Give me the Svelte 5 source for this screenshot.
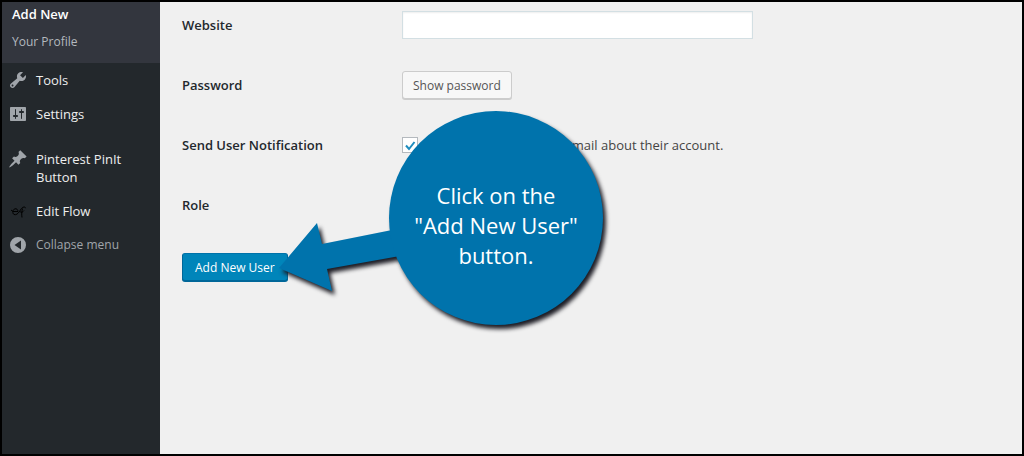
<script>
  const menu = [
    { name: "Tools", icon: "tools" },
    { name: "Settings", icon: "settings" },
    { name: "Pinterest PinIt Button", icon: "pin", first: true },
    { name: "Edit Flow", icon: "flow" },
  ];

  const icons = {
    tools:
      "M16.68 9.77c-1.34 1.34-3.3 1.67-4.95.99l-5.41 6.52c-.99.99-2.59.99-3.58 0s-.99-2.59 0-3.57l6.52-5.42c-.68-1.65-.35-3.61.99-4.95 1.28-1.28 3.12-1.62 4.72-1.06l-2.89 2.89 2.82 2.82 2.86-2.87c.53 1.58.18 3.39-1.08 4.65zM3.81 16.21c.4.39 1.04.39 1.43 0 .4-.4.4-1.04 0-1.43-.39-.4-1.03-.4-1.43 0-.39.39-.39 1.03 0 1.43z",
    settings:
      "M18 16V4c0-.55-.45-1-1-1H3c-.55 0-1 .45-1 1v12c0 .55.45 1 1 1h14c.55 0 1-.45 1-1zM8 11h1c.55 0 1 .45 1 1s-.45 1-1 1H8v1.5c0 .28-.22.5-.5.5s-.5-.22-.5-.5V13H6c-.55 0-1-.45-1-1s.45-1 1-1h1V5.5c0-.28.22-.5.5-.5s.5.22.5.5V11zm5-2h-1c-.55 0-1-.45-1-1s.45-1 1-1h1V5.5c0-.28.22-.5.5-.5s.5.22.5.5V7h1c.55 0 1 .45 1 1s-.45 1-1 1h-1v5.5c0 .28-.22.5-.5.5s-.5-.22-.5-.5V9z",
    pin: "M10.44 3.02l1.82-1.82 6.36 6.35-1.83 1.82c-1.05-.68-2.48-.57-3.41.36l-.75.75c-.92.93-1.04 2.35-.35 3.41l-1.83 1.82-2.41-2.41-2.8 2.79c-.42.42-3.38 2.71-3.8 2.29s1.86-3.39 2.28-3.81l2.79-2.79L4.1 9.36l1.83-1.82c1.05.69 2.48.57 3.4-.36l.75-.75c.93-.92 1.05-2.35.36-3.41z",
  };

  let website = "";
  let notify = true;
</script>

<div class="page">
  <nav>
    <ul class="submenu">
      <li><a class="current" href="#add-new">Add New</a></li>
      <li><a href="#profile">Your Profile</a></li>
    </ul>
    <ul class="menu">
      {#each menu as item}
        <li class:first={item.first}>
          <a class="item" href="#{item.icon}">
            <svg viewBox="0 0 20 20" aria-hidden="true">
              {#if item.icon == "flow"}
                <path
                  class="flow"
                  d="M3 9l2 1.500h5c0-2-1.500-3-3-2.700-2.500.7-2.800 4.700-1 5.700 2 .8 4-.8 5.500-3 1.200-2 2.500-4.500 4.500-4.500 1 0 1.500.5 1.500 1.200M12 10c0 2 2.500 1.700 4-.5M14.500 7.500c-.8 3-1 6-.5 9"
                />
              {:else}
                <path fill-rule="evenodd" d={icons[item.icon]} />
              {/if}
            </svg>
            <span>{item.name}</span>
          </a>
        </li>
      {/each}
    </ul>
    <button type="button" class="item collapse">
      <svg viewBox="0 0 20 20" aria-hidden="true">
        <path fill-rule="evenodd" d="M10 2a8 8 0 1 0 0 16a8 8 0 1 0 0-16zM13 5.500v9L6.500 10z" />
      </svg>
      <span>Collapse menu</span>
    </button>
  </nav>

  <main>
    <form on:submit|preventDefault>
      <div class="row">
        <label class="title" for="website">Website</label>
        <input id="website" class="text" type="text" bind:value={website} />
      </div>
      <div class="row">
        <label class="title" for="show-password">Password</label>
        <button id="show-password" class="button" type="button">Show password</button>
      </div>
      <div class="row">
        <span class="title">Send User Notification</span>
        <label class="check">
          <input type="checkbox" bind:checked={notify} />
          Send the new user an email about their account.
        </label>
      </div>
      <div class="row">
        <span class="title">Role</span>
      </div>
      <button class="button primary" type="submit">Add New User</button>
    </form>

    <div class="callout">
      <svg viewBox="0 0 340 230" aria-hidden="true">
        <path d="M3 160L41 115L46 136L116 122L124 148L51 161L56 183z" />
        <circle cx="220" cy="110" r="107" />
      </svg>
      <p>Click on the<br />"Add New User"<br />button.</p>
    </div>
  </main>
</div>

<style>
  :global(body) {
    background: #f0f0f0;
  }
  .page {
    display: flex;
    min-height: 100vh;
    box-sizing: border-box;
    border: 2px solid #000;
    font-family: "Open Sans", "Noto Sans", sans-serif;
    font-size: 13px;
    line-height: 18px;
    color: #444;
  }

  nav {
    flex: 0 0 158px;
    background: #23282c;
  }
  ul {
    list-style: none;
    margin: 0;
    padding: 0;
  }
  a {
    color: #eee;
    text-decoration: none;
  }
  .submenu {
    display: flex;
    flex-direction: column;
    gap: 10px;
    padding: 3px 10px 12px;
    background: #33363e;
    font-size: 12px;
  }
  .submenu a {
    display: block;
    color: #b4b9be;
  }
  .submenu a.current {
    color: #fff;
    font-size: 13px;
    font-weight: 600;
  }
  .first {
    margin-top: 11px;
  }
  .item {
    display: flex;
    gap: 8px;
    padding: 8px 20px 8px 6px;
  }
  .item svg {
    flex: none;
    width: 20px;
    height: 20px;
    margin: -1px 0;
    fill: #a0a5aa;
  }
  .item .flow {
    fill: none;
    stroke: #000;
    stroke-width: 1;
  }
  .collapse {
    width: 100%;
    border: 0;
    background: none;
    color: #a0a5aa;
    font: inherit;
    font-size: 12px;
    text-align: left;
  }

  main {
    position: relative;
    flex: 1;
    padding: 9px 22px;
    background: #f0f0f0;
  }
  form {
    display: flex;
    flex-direction: column;
    align-items: flex-start;
    gap: 32px;
  }
  .row {
    display: grid;
    grid-template-columns: 220px 1fr;
    align-items: center;
    justify-items: start;
    width: 100%;
    min-height: 28px;
  }
  .title {
    color: #23282d;
    font-weight: 600;
  }
  .text {
    box-sizing: border-box;
    width: 100%;
    max-width: 351px;
    height: 28px;
    border: 1px solid #d3dfe3;
    background: #fff;
    box-shadow: inset 0 1px 2px rgba(0, 0, 0, 0.07);
  }
  .button {
    height: 28px;
    padding: 0 10px;
    border: 1px solid #ccc;
    border-radius: 3px;
    background: #f7f7f7;
    box-shadow: 0 1px 0 #ccc;
    color: #555;
    font-family: inherit;
    font-size: 12px;
  }
  .primary {
    margin-top: 2px;
    padding: 0 12px;
    border-color: #0073aa #006799 #006799;
    background: #0085ba;
    box-shadow: 0 1px 0 #006799;
    color: #fff;
  }
  .check {
    display: flex;
    align-items: center;
    gap: 12px;
  }
  .check input {
    appearance: none;
    width: 16px;
    height: 16px;
    margin: 0;
    border: 1px solid #b4b9be;
    background: #fff;
  }
  .check input:checked {
    background: #fff
      url("data:image/svg+xml,%3Csvg xmlns='http://www.w3.org/2000/svg' viewBox='0 0 14 14'%3E%3Cpath d='M3 7.500l3 3.500 5.500-7' fill='none' stroke='%231e8cbe' stroke-width='2'/%3E%3C/svg%3E");
  }

  .callout {
    position: absolute;
    top: 106px;
    left: 116px;
    width: 340px;
  }
  .callout svg {
    display: block;
    overflow: visible;
    fill: #0073ac;
    filter: drop-shadow(3px 4px 2px #1c1c24);
  }
  .callout p {
    position: absolute;
    top: 72px;
    left: 113px;
    width: 214px;
    margin: 0;
    color: #fff;
    font-size: 22px;
    line-height: 30px;
    text-align: center;
  }
</style>
